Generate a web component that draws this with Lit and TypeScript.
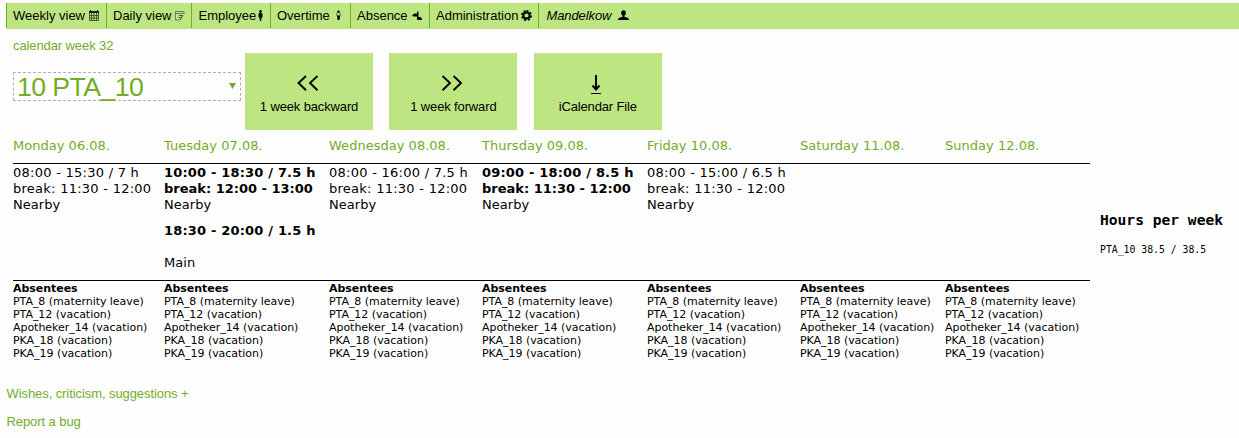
import { LitElement, html, css, svg } from "lit";
import { customElement } from "lit/decorators.js";

const icons = {
  calendar: svg`<path fill="#1c2212" d="M1 0h1v1h6V0h1v1h1v2H0V1h1z"/><path fill="none" stroke="#4a5a34" d="M.5 3v7.500h9V3M2.500 3v7M5 3v7M7.500 3v7M0 5.500h10M0 8h10"/>`,
  note: svg`<path fill="none" stroke="#6b8050" d="M9 4V1.500H.5v8.500h4M1 3.500h8"/><path fill="none" stroke="#3c4a2a" d="M4 5.500h3M3.500 7.500h2M8 5L5 10"/>`,
  person: svg`<circle cx="2.500" cy="1.300" r="1.200"/><path d="M1.500 2.500h2l1 1.500v3l-1 1-.4 3H2l-.5-3-1-1V4z"/>`,
  clock: svg`<circle cx="2.500" cy="1.700" r="1.300"/><path d="M.3 3h1v2h2.400V3h1v2.500L3.500 7v3h-2V7L.3 5.500z" opacity=".55"/><path d="M1.200 6h2.600v1.500L3.300 10H1.700z"/>`,
  plane: svg`<path d="M0 5.500L2.500 3.500H5V1.500h1.500V7H9v1.200h1V10H5V6.500H1.500z"/>`,
  gear: svg`<path fill="none" stroke="#000" stroke-width="2.200" stroke-dasharray="1.900 1.553" d="M5.500 1.100a4.400 4.400 0 1 1-.01 0"/><circle cx="5.500" cy="5.500" r="3.100" fill="none" stroke="#000" stroke-width="2"/>`,
  user: svg`<ellipse cx="5.500" cy="3" rx="2.300" ry="2.800"/><path d="M4.600 5h1.800v1.800l3.300 1q1.300.6 1.300 2.200H0q0-1.600 1.300-2.200l3.300-1z"/>`,
};

const menu = [
  { label: "Weekly view", icon: icons.calendar, w: 100, iw: 10, gap: 4, pad: 6 },
  { label: "Daily view", icon: icons.note, w: 85, iw: 10, gap: 3, pad: 6 },
  { label: "Employee", icon: icons.person, w: 79, iw: 5, gap: 2, pad: 6.5 },
  { label: "Overtime", icon: icons.clock, w: 80, iw: 5, gap: 6, pad: 6 },
  { label: "Absence", icon: icons.plane, w: 79, iw: 11, gap: 4, pad: 6 },
  { label: "Administration", icon: icons.gear, w: 109, iw: 11, gap: 3, pad: 6 },
  { label: "Mandelkow", icon: icons.user, w: 120, iw: 11, gap: 7, pad: 7.5, italic: true },
];

type Shift = { time: string; pause?: string; place: string; bold?: boolean };
const days: { name: string; shifts: Shift[] }[] = [
  { name: "Monday 06.08.", shifts: [{ time: "08:00 - 15:30 / 7 h", pause: "break: 11:30 - 12:00", place: "Nearby" }] },
  {
    name: "Tuesday 07.08.",
    shifts: [
      { time: "10:00 - 18:30 / 7.5 h", pause: "break: 12:00 - 13:00", place: "Nearby", bold: true },
      { time: "18:30 - 20:00 / 1.5 h", place: "Main", bold: true },
    ],
  },
  { name: "Wednesday 08.08.", shifts: [{ time: "08:00 - 16:00 / 7.5 h", pause: "break: 11:30 - 12:00", place: "Nearby" }] },
  { name: "Thursday 09.08.", shifts: [{ time: "09:00 - 18:00 / 8.5 h", pause: "break: 11:30 - 12:00", place: "Nearby", bold: true }] },
  { name: "Friday 10.08.", shifts: [{ time: "08:00 - 15:00 / 6.5 h", pause: "break: 11:30 - 12:00", place: "Nearby" }] },
  { name: "Saturday 11.08.", shifts: [] },
  { name: "Sunday 12.08.", shifts: [] },
];

const absentees = ["PTA_8 (maternity leave)", "PTA_12 (vacation)", "Apotheker_14 (vacation)", "PKA_18 (vacation)", "PKA_19 (vacation)"];

const actions = [
  { label: "1 week backward", d: "M9 5L1.500 12 9 19.300M20.500 5L13 12l7.500 7.300" },
  { label: "1 week forward", d: "M1.500 5L9 12l-7.500 7.300M12.500 5L20 12l-7.500 7.300" },
  { label: "iCalendar File", d: "M10 4v15M6.500 14.500L10 18.500l3.500-4", line: "M5 22.500h10" },
];

@customElement("app-root")
export class AppRoot extends LitElement {
  static styles = css`
    :host {
      display: block;
      box-sizing: border-box;
      height: 438px;
      overflow: hidden;
      padding-top: 3px;
      background: #fefefe;
      color: #000;
      font: 13px/16px "Liberation Sans", Arial, sans-serif;
      white-space: nowrap;
    }
    .nav { display: flex; height: 26px; margin-left: 6px; background: #bde682; }
    .item {
      box-sizing: border-box;
      display: flex;
      height: 25px;
      border-left: 1px solid #73ac27;
      line-height: 25px;
    }
    .item svg { flex: none; height: 11px; margin-top: 6.500px; }
    .italic { font-style: italic; letter-spacing: -0.1px; }
    .week { height: 16px; margin: 9px 0 0 13px; color: #73ac27; letter-spacing: -0.1px; }
    .controls { display: flex; align-items: flex-start; height: 77px; margin-top: -1px; }
    .select {
      box-sizing: border-box;
      display: flex;
      justify-content: space-between;
      width: 228px;
      height: 29px;
      margin: 19px 4px 0 13px;
      padding: 0 4px 0 3px;
      border: 1px dashed #b0b0b0;
      color: #73ac27;
      font-size: 26.700px;
      letter-spacing: -0.6px;
      line-height: 29px;
    }
    .arrow { width: 7px; height: 6px; margin-top: 10px; fill: #73ac27; }
    .action {
      display: flex;
      flex-direction: column;
      align-items: center;
      width: 128px;
      height: 77px;
      margin-right: 16.400px;
      background: #bde682;
      letter-spacing: -0.14px;
    }
    .action svg { width: 24px; height: 26px; margin: 18px 0 2px; fill: none; stroke: #000; stroke-width: 1.900; }
    .action .thin { stroke-width: 1; }
    .main { display: flex; align-items: center; height: 232px; }
    .table { width: 1077px; height: 232px; margin-left: 13px; font-family: "DejaVu Sans", Verdana, sans-serif; }
    .row { display: grid; grid-template-columns: 151px 165px 153px 165px 153px 145px 145px; }
    .days { height: 34px; box-sizing: border-box; padding-top: 8px; color: #73ac27; border-bottom: 1px solid #000; letter-spacing: 0.02px; }
    .shifts { height: 117px; box-sizing: border-box; padding-top: 1px; border-bottom: 1px solid #000; }
    .shift { margin-bottom: 10px; }
    .time { letter-spacing: 0.26px; }
    .place { letter-spacing: 0.05px; }
    .bold { font-weight: bold; }
    .time.bold { letter-spacing: 0.18px; }
    .pause.bold { letter-spacing: 0; }
    .single { margin-bottom: 16px; }
    .absent { padding-top: 1px; font-size: 11px; line-height: 13px; letter-spacing: -0.04px; }
    .hours { margin-left: 10px; padding-bottom: 25px; font-family: "DejaVu Sans Mono", Consolas, monospace; }
    .title { font-size: 14.600px; font-weight: bold; line-height: 20px; }
    .total { margin-top: 13px; font-size: 9.800px; line-height: 14px; }
    .links { padding: 24px 0 0 6.500px; color: #73ac27; letter-spacing: -0.08px; }
    .link { height: 28px; }
  `;

  render() {
    return html`
      <nav class="nav">
        ${menu.map(
          (m) => html`<div class="item" style="width:${m.w}px;padding-left:${m.pad}px">
            <span class=${m.italic ? "italic" : ""}>${m.label}</span
            ><svg width=${m.iw} viewBox="0 0 ${m.iw} 11" style="margin-left:${m.gap}px">${m.icon}</svg>
          </div>`
        )}
      </nav>
      <div class="week">calendar week 32</div>
      <div class="controls">
        <div class="select"><span>10 PTA_10</span><svg class="arrow" viewBox="0 0 7 6"><path d="M0 0h7L3.500 6z" /></svg></div>
        ${actions.map(
          (a) => html`<div class="action">
            <svg viewBox="0 0 24 26"><path d=${a.d} /><path class="thin" d=${a.line ?? ""} /></svg><span>${a.label}</span>
          </div>`
        )}
      </div>
      <div class="main">
        <div class="table">
          <div class="row days">${days.map((d) => html`<div>${d.name}</div>`)}</div>
          <div class="row shifts">
            ${days.map(
              (d) => html`<div>
                ${d.shifts.map(
                  (s) => html`<div class="shift">
                    <div class="time ${s.bold ? "bold" : ""} ${s.pause ? "" : "single"}">${s.time}</div>
                    ${s.pause ? html`<div class="time pause ${s.bold ? "bold" : ""}">${s.pause}</div>` : ""}
                    <div class="place">${s.place}</div>
                  </div>`
                )}
              </div>`
            )}
          </div>
          <div class="row absent">
            ${days.map(() => html`<div><div class="bold">Absentees</div>${absentees.map((a) => html`<div>${a}</div>`)}</div>`)}
          </div>
        </div>
        <div class="hours">
          <div class="title">Hours per week</div>
          <div class="total">PTA_10 38.5 / 38.5</div>
        </div>
      </div>
      <div class="links">
        <div class="link">Wishes, criticism, suggestions +</div>
        <div class="link">Report a bug</div>
      </div>
    `;
  }
}
